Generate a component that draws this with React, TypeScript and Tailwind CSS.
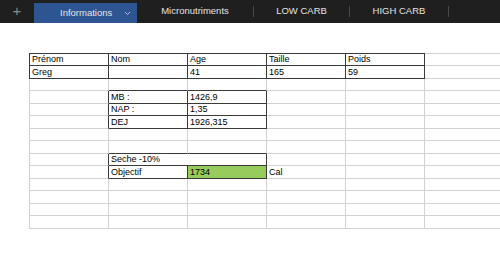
const cols = [80, 79, 79, 79, 79];
const ROWS = 14;

type Cell = { text?: string; span?: number; green?: boolean };

const content: Record<number, Record<number, Cell>> = {
  0: { 0: { text: "Prénom" }, 1: { text: "Nom" }, 2: { text: "Age" }, 3: { text: "Taille" }, 4: { text: "Poids" } },
  1: { 0: { text: "Greg" }, 2: { text: "41" }, 3: { text: "165" }, 4: { text: "59" } },
  3: { 1: { text: "MB :" }, 2: { text: "1426,9" } },
  4: { 1: { text: "NAP :" }, 2: { text: "1,35" } },
  5: { 1: { text: "DEJ" }, 2: { text: "1926,315" } },
  8: { 1: { text: "Seche -10%", span: 2 } },
  9: { 1: { text: "Objectif" }, 2: { text: "1734", green: true }, 3: { text: "Cal" } },
};

function isDark(r: number, c: number) {
  if (r >= 0 && r <= 1 && c >= 0 && c <= 4) return true;
  if (r >= 3 && r <= 5 && c >= 1 && c <= 2) return true;
  if (r >= 8 && r <= 9 && c >= 1 && c <= 2) return true;
  return false;
}

function Tabs() {
  const tabs = [
    { label: "Micronutriments", w: "w-[117px]" },
    { label: "LOW CARB", w: "w-[96px]" },
    { label: "HIGH CARB", w: "w-[99px]" },
  ];
  return (
    <div className="flex h-[23px] bg-[#1f1f1f] text-[9.5px] text-[#e4e4e4]">
      <div className="flex w-[34px] items-center justify-center text-[15px] font-light text-[#8a8a8a]">+</div>
      <div className="mt-[3px] flex w-[103px] items-center bg-[#2d5592] pl-[26px]">
        <span>Informations</span>
        <svg className="ml-auto mr-[6px]" width="7" height="5" viewBox="0 0 7 5">
          <path d="M1 1l2.5 2.5L6 1" fill="none" stroke="#a9c1e8" strokeWidth="1" />
        </svg>
      </div>
      {tabs.map((t) => (
        <div key={t.label} className={`flex ${t.w} items-center justify-center border-r border-[#4a4a4a] my-[6px]`}>
          {t.label}
        </div>
      ))}
    </div>
  );
}

function Sheet() {
  const rows = Array.from({ length: ROWS }, (_, r) => r);
  return (
    <div className="ml-[29px] mt-[30px] text-[9px] text-black" style={{ fontFamily: "'Liberation Sans', Arial, sans-serif" }}>
      <div className="flex h-px">
        {cols.map((w, c) => (
          <div key={c} style={{ width: w }} className={isDark(0, c) ? "bg-[#3a3a3a]" : "bg-[#d2d2d2]"} />
        ))}
        <div className="flex-1 bg-[#d2d2d2]" />
      </div>
      {rows.map((r) => {
        const h = r % 2 === 0 ? "h-[12px]" : "h-[13px]";
        const cells = [];
        for (let c = 0; c < 6; c++) {
          const cell = content[r]?.[c];
          const span = cell?.span ?? 1;
          const last = c + span - 1;
          const w = c === 5 ? undefined : cols.slice(c, Math.min(last + 1, 5)).reduce((a, b) => a + b, 0);
          const bottomDark = isDark(r, c) || isDark(r + 1, c);
          const rightDark = isDark(r, last) || isDark(r, last + 1);
          cells.push(
            <div
              key={c}
              style={w ? { width: w } : undefined}
              className={`flex items-center overflow-visible whitespace-nowrap border-b pl-[2px] leading-none ${c === 5 ? "flex-1" : "border-r"} ${
                c === 0 ? "border-l" : ""
              } ${c === 0 ? (isDark(r, 0) ? "border-l-[#3a3a3a]" : "border-l-[#d2d2d2]") : ""} ${
                bottomDark ? "border-b-[#3a3a3a]" : "border-b-[#d2d2d2]"
              } ${rightDark ? "border-r-[#3a3a3a]" : "border-r-[#d2d2d2]"} ${cell?.green ? "bg-[#97cb5b]" : ""}`}
            >
              {cell?.text}
            </div>
          );
          c = last;
        }
        return (
          <div key={r} className={`flex ${h}`}>
            {cells}
          </div>
        );
      })}
    </div>
  );
}

export default function App() {
  return (
    <div className="h-[253px] w-[500px] overflow-hidden bg-white" style={{ fontFamily: "'Liberation Sans', Arial, sans-serif" }}>
      <Tabs />
      <Sheet />
    </div>
  );
}
